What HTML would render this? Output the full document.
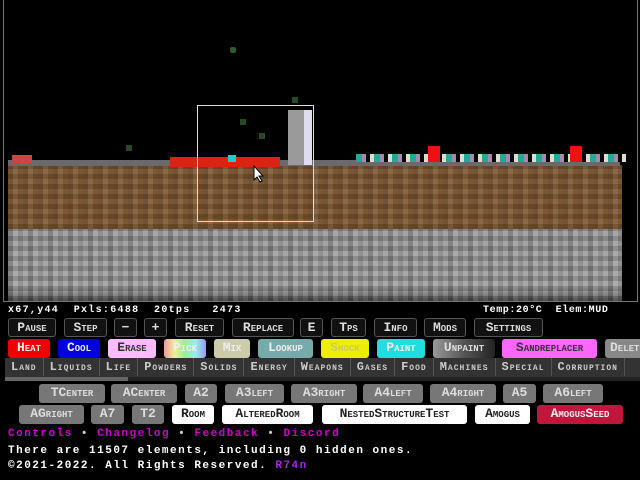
<!DOCTYPE html>
<html><head><meta charset="utf-8"><style>
*{margin:0;padding:0;box-sizing:border-box}
body{width:640px;height:480px;background:#000;position:relative;overflow:hidden;font-family:"Liberation Mono",monospace;font-weight:bold;color:#fff}
.a{position:absolute}
#cv{left:3px;top:-2px;width:635px;height:304px;border:1px solid #777;background:#000;overflow:hidden}
.dirt{left:8px;top:165px;width:614px;height:64px;background:
repeating-linear-gradient(90deg,rgba(0,0,0,.12) 0 5px,rgba(255,255,255,.06) 5px 10px,rgba(0,0,0,.08) 10px 15px),
repeating-linear-gradient(0deg,rgba(0,0,0,.1) 0 5px,rgba(255,255,255,.05) 5px 10px),#7d5630}
.rock{left:8px;top:229px;width:614px;height:72px;background:
repeating-linear-gradient(90deg,rgba(0,0,0,.18) 0 5px,rgba(255,255,255,.08) 5px 10px,rgba(0,0,0,.1) 10px 15px,rgba(255,255,255,.04) 15px 20px),
repeating-linear-gradient(0deg,rgba(0,0,0,.15) 0 5px,rgba(255,255,255,.06) 5px 10px),linear-gradient(#999,#a0a0a0 80%,#555)}
.st{font-size:10px;top:305px;color:#fff;letter-spacing:1.3px}
.b{position:absolute;height:19px;border:1px solid #555;border-radius:3px;font-size:13px;font-variant:small-caps;text-align:center;line-height:17px;color:#ddd;background:#111;white-space:nowrap;overflow:hidden}
.e{border:none;color:#eee}
.g{background:#777;color:#ddd;border:none}
.w{background:#fff;color:#222;border:none}
.cat{left:5px;top:358px;width:635px;height:19px;background:#333;font-size:12px;font-variant:small-caps;color:#ccc;line-height:18px;white-space:nowrap;overflow:hidden;letter-spacing:1px}
.cat span{display:inline-block;padding:0 6px;border-right:1px solid #555}
.t{font-size:11px;left:8px;letter-spacing:1.5px}
</style></head><body>
<div id="cv" class="a"></div>
<div class="a" style="left:230px;top:47px;width:6px;height:6px;background:#2a5a2a;border-radius:2px"></div>
<div class="a" style="left:126px;top:145px;width:6px;height:6px;background:#244a24"></div>
<div class="a" style="left:292px;top:97px;width:6px;height:6px;background:#244a24"></div>
<div class="a" style="left:240px;top:119px;width:6px;height:6px;background:#244a24"></div>
<div class="a" style="left:259px;top:133px;width:6px;height:6px;background:#244a24"></div>
<div class="a dirt"></div>
<div class="a rock"></div>
<div class="a" style="left:8px;top:160px;width:612px;height:6px;background:#6a6a6a"></div>
<div class="a" style="left:12px;top:155px;width:20px;height:8px;background:#c44"></div>
<div class="a" style="left:170px;top:157px;width:110px;height:10px;background:#d21"></div>
<div class="a" style="left:228px;top:155px;width:8px;height:7px;background:#2cc"></div>
<div class="a" style="left:288px;top:110px;width:24px;height:55px;background:#9a9a9a"></div>
<div class="a" style="left:304px;top:110px;width:8px;height:55px;background:#dde"></div>
<div class="a" style="left:356px;top:154px;width:270px;height:8px;background:repeating-linear-gradient(90deg,#2a9 0 6px,#a8a 6px 10px,#000 10px 14px,#ddc 14px 18px)"></div>
<div class="a" style="left:428px;top:146px;width:12px;height:16px;background:#e11"></div>
<div class="a" style="left:570px;top:146px;width:12px;height:16px;background:#e11"></div>
<div class="a" style="left:197px;top:105px;width:117px;height:117px;border:1px solid #ddd"></div>
<svg class="a" style="left:253px;top:165px" width="12" height="18" viewBox="0 0 12 18"><path d="M1 1 L1 15 L4 12 L7 17 L9 16 L6 11 L10 11 Z" fill="#fff" stroke="#000" stroke-width="1"/></svg>
<div class="a st" style="left:8px">x67,y44 &nbsp;Pxls:6488 &nbsp;20tps &nbsp;&nbsp;2473</div>
<div class="a st" style="left:483px;letter-spacing:0.6px">Temp:20°C &nbsp;Elem:MUD</div>

<div class="b" style="left:8px;top:318px;width:48px">Pause</div>
<div class="b" style="left:64px;top:318px;width:43px">Step</div>
<div class="b" style="left:114px;top:318px;width:23px">−</div>
<div class="b" style="left:144px;top:318px;width:23px">+</div>
<div class="b" style="left:175px;top:318px;width:49px">Reset</div>
<div class="b" style="left:232px;top:318px;width:62px">Replace</div>
<div class="b" style="left:300px;top:318px;width:23px">E</div>
<div class="b" style="left:331px;top:318px;width:35px">Tps</div>
<div class="b" style="left:374px;top:318px;width:43px">Info</div>
<div class="b" style="left:424px;top:318px;width:42px">Mods</div>
<div class="b" style="left:474px;top:318px;width:69px">Settings</div>

<div class="b e" style="left:8px;top:339px;width:42px;background:#e00">Heat</div>
<div class="b e" style="left:58px;top:339px;width:42px;background:#00d">Cool</div>
<div class="b e" style="left:108px;top:339px;width:48px;background:#fbf;color:#333">Erase</div>
<div class="b e" style="left:164px;top:339px;width:42px;background:linear-gradient(90deg,#e99,#ee9,#9e9,#9ee,#99e);color:#eee">Pick</div>
<div class="b e" style="left:214px;top:339px;width:36px;background:#cca;color:#eee">Mix</div>
<div class="b e" style="left:258px;top:339px;width:55px;background:#7aa;color:#eee">Lookup</div>
<div class="b e" style="left:321px;top:339px;width:48px;background:#ee0;color:#cc6">Shock</div>
<div class="b e" style="left:377px;top:339px;width:48px;background:#2dd;color:#eee">Paint</div>
<div class="b e" style="left:433px;top:339px;width:62px;background:linear-gradient(90deg,#999,#555,#222);color:#ddd">Unpaint</div>
<div class="b e" style="left:502px;top:339px;width:95px;background:#f6f;color:#333">Sandreplacer</div>
<div class="b e" style="left:605px;top:339px;width:40px;background:#888;color:#ddd;text-align:left;padding-left:5px">Delete</div>

<div class="a cat"><span>Land</span><span>Liquids</span><span>Life</span><span>Powders</span><span>Solids</span><span>Energy</span><span>Weapons</span><span>Gases</span><span>Food</span><span>Machines</span><span>Special</span><span>Corruption</span></div>
<div class="a" style="left:5px;top:377px;width:635px;height:4px;background:#222"></div>
<div class="a" style="left:5px;top:377px;width:123px;height:4px;background:#666"></div>

<div class="b g" style="left:39px;top:384px;width:66px">TCenter</div>
<div class="b g" style="left:111px;top:384px;width:66px">ACenter</div>
<div class="b g" style="left:185px;top:384px;width:32px">A2</div>
<div class="b g" style="left:225px;top:384px;width:59px">A3left</div>
<div class="b g" style="left:291px;top:384px;width:66px">A3right</div>
<div class="b g" style="left:363px;top:384px;width:60px">A4left</div>
<div class="b g" style="left:430px;top:384px;width:66px">A4right</div>
<div class="b g" style="left:503px;top:384px;width:33px">A5</div>
<div class="b g" style="left:543px;top:384px;width:60px">A6left</div>

<div class="b g" style="left:19px;top:405px;width:65px">AGright</div>
<div class="b g" style="left:91px;top:405px;width:33px">A7</div>
<div class="b g" style="left:132px;top:405px;width:32px">T2</div>
<div class="b w" style="left:172px;top:405px;width:42px">Room</div>
<div class="b w" style="left:222px;top:405px;width:91px">AlteredRoom</div>
<div class="b w" style="left:322px;top:405px;width:145px">NestedStructureTest</div>
<div class="b w" style="left:475px;top:405px;width:55px">Amogus</div>
<div class="b" style="left:537px;top:405px;width:86px;background:#c0163c;color:#eee;border:none">AmogusSeed</div>

<div class="a t" style="top:428px;color:#c0c"><span style="color:#c0c">Controls</span> <span style="color:#ccc">•</span> Changelog <span style="color:#ccc">•</span> Feedback <span style="color:#ccc">•</span> Discord</div>
<div class="a t" style="top:445px">There are 11507 elements, including 0 hidden ones.</div>
<div class="a t" style="top:460px">©2021-2022. All Rights Reserved. <span style="color:#a2e">R74n</span></div>
</body></html>
